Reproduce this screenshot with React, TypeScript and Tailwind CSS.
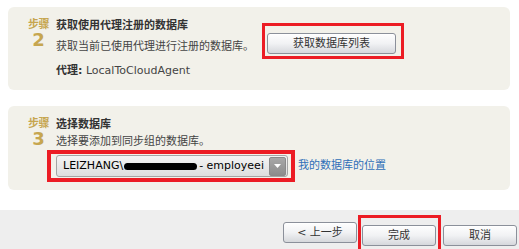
import React from "react"

const font = { fontFamily: '"DejaVu Sans", "Noto Sans CJK SC", sans-serif' }

function StepMark({ n }: { n: string }) {
  return (
    <div className="w-[35px] shrink-0 flex flex-col items-center text-[#c6a650] font-bold">
      <span className="text-[11px] leading-[14px] tracking-[-0.5px]">步骤</span>
      <span className="text-[18px] leading-[14px] mt-[1px]">{n}</span>
    </div>
  )
}

function Btn({ children, w = "w-[74px]" }: { children: React.ReactNode; w?: string }) {
  return (
    <button
      className={`${w} h-[21px] rounded-[3px] border border-[#8b909a] bg-gradient-to-b from-[#fefefe] via-[#f1f2f4] to-[#d6d8dc] text-[11px] text-[#333] leading-none shadow-[inset_0_1px_0_#fff]`}
    >
      {children}
    </button>
  )
}

function RedBox({ className }: { className: string }) {
  return <span className={`pointer-events-none absolute border-[#ec1c24] ${className}`} />
}

export default function App() {
  return (
    <div className="w-[519px] h-[249px] bg-white flex flex-col text-[#444]" style={font}>
      <div className="pt-[7px] px-[8px] flex flex-col gap-[16px]">
        {/* step 2 */}
        <div className="h-[83px] w-[502px] rounded-[6px] bg-[#f2f1ea] flex pl-[13px] pt-[11px]">
          <StepMark n="2" />
          <div className="w-[206px] flex flex-col">
            <div className="text-[11px] leading-[16px] font-bold text-[#333]">获取使用代理注册的数据库</div>
            <div className="text-[11px] leading-[16px] mt-[5px] whitespace-nowrap">获取当前已使用代理进行注册的数据库。</div>
            <div className="text-[11px] leading-[16px] mt-[8px]">
              <span className="font-bold text-[#333]">代理:</span> LocalToCloudAgent
            </div>
          </div>
          <div className="relative ml-[5px] mt-[12px] h-[22px]">
            <Btn w="w-[129px]">获取数据库列表</Btn>
            <RedBox className="border-[3px] -left-[5px] -top-[7px] w-[142px] h-[36px]" />
          </div>
        </div>

        {/* step 3 */}
        <div className="h-[84px] w-[502px] rounded-[6px] bg-[#f2f1ea] flex pl-[13px] pt-[11px]">
          <StepMark n="3" />
          <div className="flex flex-col">
            <div className="text-[11px] leading-[16px] font-bold text-[#333]">选择数据库</div>
            <div className="text-[11px] leading-[16px] mt-[1px]">选择要添加到同步组的数据库。</div>
            <div className="flex items-center mt-[5px]">
              <div className="relative">
                <div className="w-[232px] h-[22px] rounded-[3px] border border-[#a4a4a4] bg-gradient-to-b from-[#f4f4f4] to-[#dedede] flex items-center pl-[6px] pr-[1px]">
                  <span className="text-[11px] text-black whitespace-nowrap flex items-center">
                    LEIZHANG\
                    <span className="inline-block w-[73px] h-[7px] rounded-full bg-black ml-[1px] mr-[2px]" />
                    - employeei
                  </span>
                  <span className="ml-auto w-[17px] h-[19px] rounded-[2px] bg-gradient-to-b from-[#a8a8a8] to-[#8c8c8c] border border-[#8a8a8a] flex items-center justify-center">
                    <svg width="7" height="4" viewBox="0 0 7 4">
                      <path d="M0 0h7L3.5 4z" fill="#fff" />
                    </svg>
                  </span>
                </div>
                <RedBox className="border-[4px] -left-[9px] -top-[5px] w-[248px] h-[32px]" />
              </div>
              <a className="ml-[10px] text-[11px] text-[#2f6fb8] whitespace-nowrap">我的数据库的位置</a>
            </div>
          </div>
        </div>
      </div>

      {/* footer */}
      <div className="mt-auto h-[39px] bg-[#eeeeee] flex justify-end items-start pt-[12px] pr-[2px] gap-[5px]">
        <Btn>&lt; 上一步</Btn>
        <div className="relative">
          <Btn>完成</Btn>
          <RedBox className="border-[3px] -left-[4px] -top-[7px] w-[83px] h-[40px]" />
        </div>
        <div className="ml-[2px]">
          <Btn>取消</Btn>
        </div>
      </div>
    </div>
  )
}
